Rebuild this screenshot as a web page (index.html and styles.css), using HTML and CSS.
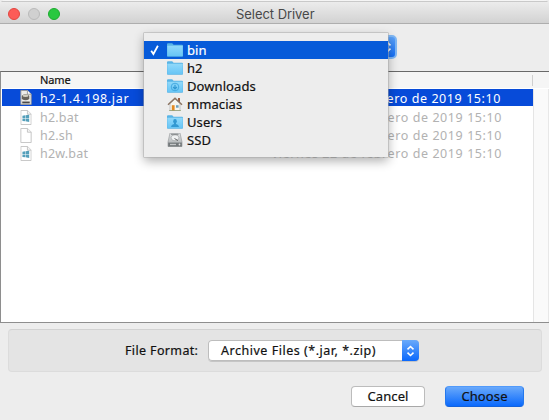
FILE: index.html
```html
<!DOCTYPE html>
<html lang="en">
<head>
<meta charset="utf-8">
<title>Select Driver</title>
<link rel="stylesheet" href="styles.css">
</head>
<body>
<svg class="defs" width="0" height="0">
  <defs>
    <linearGradient id="blue" x1="0" y1="0" x2="0" y2="1"><stop offset="0" stop-color="#8ed8fb"/><stop offset="1" stop-color="#68c5f5"/></linearGradient>
    <linearGradient id="metal" x1="0" y1="0" x2="0" y2="1"><stop offset="0" stop-color="#e4e6e7"/><stop offset="1" stop-color="#a5a9ab"/></linearGradient>
    <symbol id="folder" viewBox="0 0 16 14">
      <path d="M0 1.2Q0 .3 1 .3H5.2L6.6 1.8H15Q16 1.8 16 2.7V13Q16 13.7 15.2 13.7H.8Q0 13.7 0 13Z" fill="#58b4e6"/>
      <path d="M.3 3.3H15.7V13H.3Z" fill="url(#blue)"/>
      <path d="M.3 3.2H15.7" stroke="#a5e2fc" stroke-width=".7"/>
    </symbol>
    <symbol id="page" viewBox="0 0 12 16">
      <path d="M.5 .5H7.7L11.5 4.3V15.5H.5Z" fill="#fff" stroke="#c3c3c3"/>
      <path d="M7.5 .5V4.5H11.5" fill="#f5f5f5" stroke="#c3c3c3"/>
    </symbol>
    <symbol id="winfile" viewBox="0 0 12 16">
      <use href="#page"/>
      <path d="M2.2 6.1L5.1 5.7V8.6H2.2ZM5.6 5.6L9.4 5V8.6H5.6ZM2.2 9.1H5.1V12L2.2 11.6ZM5.6 9.1H9.4V12.7L5.6 12.1Z" fill="#549fba"/>
    </symbol>
  </defs>
</svg>
<div class="window">
  <header class="titlebar">
    <i class="light red"></i><i class="light gray"></i><i class="light green"></i>
    <span class="title">Select Driver</span>
  </header>
  <div class="location"><div class="location-cap"><svg width="9" height="12" viewBox="0 0 9 12"><path d="M1.5 4.3L4.5 1.5L7.5 4.3M1.5 7.7L4.5 10.5L7.5 7.7"/></svg></div></div>
  <main class="files">
    <div class="head"><span>Name</span></div>
    <div class="body">
      <div class="rows">
        <div class="row selected">
          <svg class="ico" viewBox="0 0 12 16"><path d="M.5 .5H7.7L11.5 4.3V15.5H.5Z" fill="#ededea" stroke="#999"/><path d="M7.5 .5V4.5H11.5" fill="#fff" stroke="#999"/><path d="M1.5 6Q5.5 3 9.5 6V9.5Q5.5 12.5 1.5 9.5Z" fill="#67635b"/><ellipse cx="5.5" cy="6.2" rx="3.1" ry="1.3" fill="#d2cfc1"/><path d="M2 13.3H10" stroke="#49494a" stroke-width="2"/></svg>
          <span class="name n1">h2-1.4.198.jar</span><span class="date">viernes 22 de febrero de 2019 15:10</span>
        </div>
        <div class="row"><svg class="ico"><use href="#winfile"/></svg><span class="name">h2.bat</span><span class="date">viernes 22 de febrero de 2019 15:10</span></div>
        <div class="row"><svg class="ico"><use href="#page"/></svg><span class="name">h2.sh</span><span class="date">viernes 22 de febrero de 2019 15:10</span></div>
        <div class="row"><svg class="ico"><use href="#winfile"/></svg><span class="name">h2w.bat</span><span class="date">viernes 22 de febrero de 2019 15:10</span></div>
      </div>
      <div class="scroll"></div>
    </div>
  </main>
  <section class="format">
    <label>File Format:</label>
    <div class="select"><span>Archive Files (*.jar, *.zip)</span><div class="cap"><svg width="9" height="12" viewBox="0 0 9 12"><path d="M1.5 4.3L4.5 1.5L7.5 4.3M1.5 7.7L4.5 10.5L7.5 7.7"/></svg></div></div>
  </section>
  <footer class="actions"><button class="cancel">Cancel</button><button class="choose">Choose</button></footer>

  <div class="menu">
    <div class="item active"><svg class="check" width="10" height="12" viewBox="0 0 10 12"><path d="M1.2 6.8L3.4 10L7.9 1.8" fill="none" stroke="#fff" stroke-width="1.8"/></svg><svg class="mi"><use href="#folder"/></svg><span>bin</span></div>
    <div class="item"><svg class="mi"><use href="#folder"/></svg><span>h2</span></div>
    <div class="item"><svg class="mi" viewBox="0 0 16 14"><use href="#folder" width="16" height="14"/><circle cx="8" cy="8" r="3.8" fill="none" stroke="#3ea5dc" stroke-width=".9"/><path d="M8 5.7V9.6M6.1 8L8 10L9.9 8" fill="none" stroke="#3399d2" stroke-width="1.2"/></svg><span>Downloads</span></div>
    <div class="item"><svg class="mi" viewBox="0 0 16 14"><path d="M11 1H13V5H11Z" fill="#9b6045"/><path d="M3 6.5L8 2L13 6.5V13.5H3Z" fill="#f6f5ee" stroke="#aaa" stroke-width=".6"/><path d="M1 7.8L8 1.2L15 7.8" fill="none" stroke="#8c7563" stroke-width="1.5"/><path d="M4.8 8.2H7.6V13.5H4.8Z" fill="#e28a22"/><path d="M9 8.2H11.6V10.7H9Z" fill="#6c9fbd"/><path d="M2 13.6H14" stroke="#8b9b65" stroke-width=".7"/></svg><span>mmacias</span></div>
    <div class="item"><svg class="mi" viewBox="0 0 16 14"><use href="#folder" width="16" height="14"/><ellipse cx="8" cy="6.3" rx="1.8" ry="2.2" fill="#3399d2"/><path d="M4 12Q4.2 9.7 7 9.1V8H9V9.1Q11.8 9.7 12 12Z" fill="#3399d2"/></svg><span>Users</span></div>
    <div class="item"><svg class="mi" viewBox="0 0 16 14"><path d="M3 0H13L15 9V13.5H1V9Z" fill="url(#metal)" stroke="#8e9294" stroke-width=".6"/><ellipse cx="8" cy="4.8" rx="4" ry="3" fill="#eff1f1" stroke="#a0a4a5" stroke-width=".7"/><path d="M7.5 5.5L11 7.6" stroke="#666" stroke-width="1"/><path d="M1.2 9.6H14.8V13.5H1.2Z" fill="#74797b"/><path d="M3 11.5H9" stroke="#c4c6c7" stroke-width="1.3"/><circle cx="12.5" cy="11.5" r=".9" fill="#e5e5e5"/><path d="M4 1.2H11.5" stroke="#5c6061" stroke-width=".8"/></svg><span>SSD</span></div>
  </div>
</div>
</body>
</html>
```
FILE: styles.css
```css
* { box-sizing: border-box; }
body { margin: 0; overflow: hidden; background: #ededed; font: 13px/18px "Noto Sans", sans-serif; color: #111; }
.defs { position: absolute; }
.window { position: relative; width: 549px; height: 420px; display: flex; flex-direction: column; background: #ededed; overflow: hidden; }
.titlebar { height: 24px; flex: none; display: flex; align-items: center; gap: 8px; padding: 3px 0 0 8px; background: linear-gradient(#f5f5f5 0 1px, #c9c9c9 1px 2px, #ececec 2px, #d2d2d2 23px, #aeaeae 23px); border-radius: 5px 5px 0 0; }
.light { width: 12px; height: 12px; border-radius: 50%; border: 1px solid; }
.red { background: #fc5b57; border-color: #e34640; }
.gray { background: #d0d0d0; border-color: #bababa; }
.green { background: #29c840; border-color: #1cac2e; }
.title { margin-left: 168px; font: 13px/18px Inter, sans-serif; letter-spacing: -.05px; color: #484848; white-space: nowrap; }
.location { height: 47px; flex: none; display: flex; justify-content: flex-end; padding: 11px 152px 0 0; }
.location-cap { width: 20px; height: 24px; border-radius: 5px; border: 2px solid #80b8f5; background: linear-gradient(#5ba2fa, #146ff8); display: flex; align-items: center; justify-content: center; }
.location-cap path, .cap path { fill: none; stroke: #fff; stroke-width: 1.6; }
.files { height: 252px; flex: none; display: flex; flex-direction: column; border: 1px solid #8e8e8e; border-top-color: #696969; border-right: 0; background: #fff; }
.head { height: 17px; flex: none; display: flex; justify-content: space-between; align-items: center; background: #f5f5f5; padding: 0 16px 0 39px; font-size: 11px; line-height: 16px; letter-spacing: -.1px; -webkit-text-stroke: .2px; border-bottom: 1px solid #fff; }
.head::after { content: ""; width: 1px; height: 11px; background: #cfcfcf; }
.body { flex: 1; display: flex; }
.rows { flex: 1; padding-left: 1px; }
.scroll { width: 16px; border-left: 1px solid #e5e5e5; border-right: 1px solid #e8e8e8; background: #fafafa; }
.row { height: 18px; display: flex; align-items: center; color: #b2b2b2; padding: 2px 31px 0 18px; white-space: nowrap; font-size: 12.5px; }
.row.selected { height: 17px; margin-bottom: 2px; padding: 2px 32px 0 18px; background: #074bd9; color: #fff; }
.ico { width: 12px; height: 15px; flex: none; margin-right: 8px; position: relative; top: -1px; }
.name { letter-spacing: .2px; }
.n1 { letter-spacing: .65px; }
.date { margin-left: auto; letter-spacing: .58px; }
.format { height: 43px; flex: none; margin: 6px 7px 0 8px; background: #e4e4e4; border: 1px solid #dcdcdc; border-top-color: #d2d2d2; border-radius: 4px; display: flex; align-items: center; padding-left: 116px; }
.format label { width: 83px; white-space: nowrap; font-size: 12.5px; letter-spacing: .36px; -webkit-text-stroke: .2px; }
.select { width: 211px; height: 21px; display: flex; border-radius: 4px; background: #fff; box-shadow: inset 0 0 0 1px #bdbdbd, 0 1px 0 #c5c5c5; padding-left: 13px; justify-content: space-between; align-items: center; white-space: nowrap; font-size: 12.5px; letter-spacing: .52px; -webkit-text-stroke: .2px; }
.cap { width: 17px; height: 21px; border-radius: 0 4px 4px 0; background: linear-gradient(#6aaafa, #0a68fc); display: flex; align-items: center; justify-content: center; }
.actions { display: flex; gap: 20px; padding: 14px 0 0 351px; }
button { height: 21px; padding: 0 0 1px; border: 1px solid #bcbcbc; border-bottom-color: #a8a8a8; border-radius: 4px; font: 13px/18px "Noto Sans", sans-serif; letter-spacing: .1px; -webkit-text-stroke: .2px; color: #111; background: #fff; }
.cancel { width: 74px; }
.choose { width: 79px; background: linear-gradient(#69a9fb, #0a69fc); border-color: #519afb #2478ed #1362dc; }
.menu { position: absolute; left: 144px; top: 33px; width: 244px; height: 124px; padding-top: 8px; background: #ededed; box-shadow: 0 0 0 .5px #aaa, 0 4px 10px rgba(0,0,0,.32); }
.item { height: 18px; display: flex; align-items: center; padding-left: 23px; position: relative; white-space: nowrap; letter-spacing: .08px; -webkit-text-stroke: .2px; }
.item.active { background: #075bd9; color: #fff; }
.check { position: absolute; left: 6px; top: 3px; }
.mi { width: 16px; height: 14px; flex: none; margin-right: 4px; }
```
